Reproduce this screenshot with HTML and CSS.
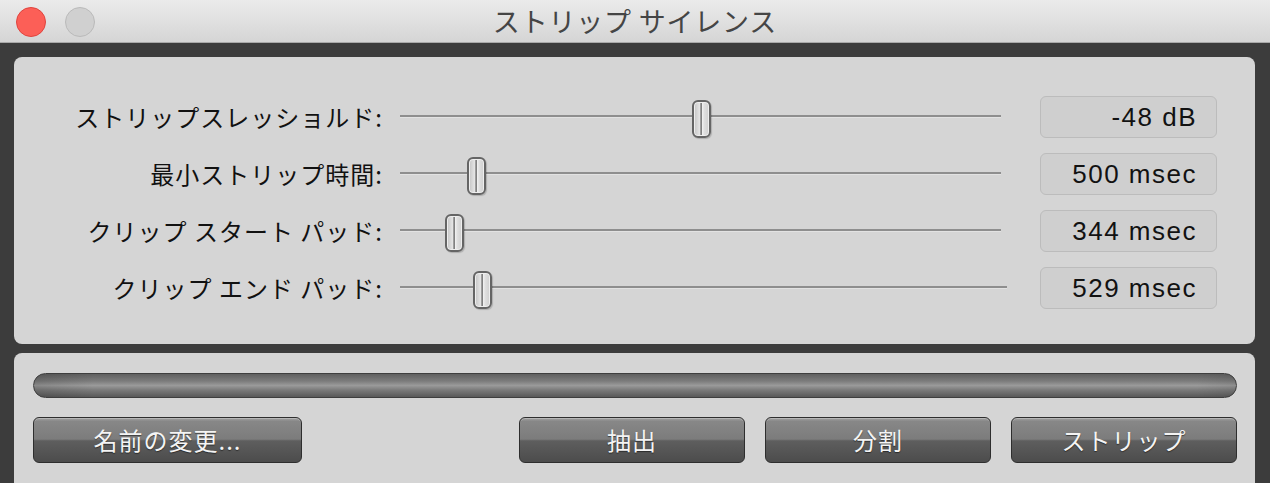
FILE: index.html
```html
<!DOCTYPE html>
<html lang="ja">
<head>
<meta charset="utf-8">
<title>ストリップ サイレンス</title>
<link rel="stylesheet" href="styles.css">
</head>
<body>
<div class="window">
  <header class="titlebar">
    <div class="lights">
      <span class="light light-close"></span>
      <span class="light light-idle"></span>
    </div>
    <div class="title">ストリップ サイレンス</div>
  </header>

  <main class="content">
    <section class="panel params">
      <div class="row">
        <label class="label">ストリップスレッショルド:</label>
        <div class="slider"><span class="track"></span><span class="thumb" style="left:292px"></span></div>
        <div class="value">-48 dB</div>
      </div>
      <div class="row">
        <label class="label">最小ストリップ時間:</label>
        <div class="slider"><span class="track"></span><span class="thumb" style="left:67px"></span></div>
        <div class="value">500 msec</div>
      </div>
      <div class="row">
        <label class="label">クリップ スタート パッド:</label>
        <div class="slider"><span class="track"></span><span class="thumb" style="left:45px"></span></div>
        <div class="value">344 msec</div>
      </div>
      <div class="row">
        <label class="label">クリップ エンド パッド:</label>
        <div class="slider slider-long"><span class="track"></span><span class="thumb" style="left:73px"></span></div>
        <div class="value">529 msec</div>
      </div>
    </section>

    <section class="panel actions">
      <div class="progress"></div>
      <div class="buttons">
        <button class="btn btn-rename">名前の変更...</button>
        <div class="btn-group">
          <button class="btn">抽出</button>
          <button class="btn">分割</button>
          <button class="btn">ストリップ</button>
        </div>
      </div>
    </section>
  </main>
</div>
</body>
</html>
```

FILE: styles.css
```css
html, body {
  margin: 0;
  padding: 0;
}

body {
  width: 1270px;
  height: 483px;
  overflow: hidden;
  background: #3c3c3c;
  font-family: "Noto Sans CJK JP", "Liberation Sans", sans-serif;
}

.window {
  width: 1270px;
  height: 483px;
  display: flex;
  flex-direction: column;
}

/* Title bar */
.titlebar {
  position: relative;
  height: 42px;
  flex: none;
  background: linear-gradient(#ebebeb, #d5d5d5);
  border-bottom: 1px solid #a9a9a9;
  display: flex;
  align-items: center;
  justify-content: center;
}

.lights {
  position: absolute;
  left: 16px;
  top: 7px;
  display: flex;
  gap: 19px;
}

.light {
  width: 28px;
  height: 28px;
  border-radius: 50%;
  box-sizing: content-box;
}

.light-close {
  background: #fc5f57;
  border: 1px solid #e0443e;
}

.light-idle {
  background: #d0d0d0;
  border: 1px solid #bababa;
}

.title {
  font-size: 27px;
  letter-spacing: 0.8px;
  color: #454545;
  line-height: 42px;
  margin-left: 0;
}

/* Content area */
.content {
  flex: 1;
  padding: 14px 15px 0 14px;
  display: flex;
  flex-direction: column;
  gap: 9px;
}

.panel {
  background: #d5d5d5;
  border-radius: 8px;
}

.params {
  height: 287px;
  box-sizing: border-box;
  padding-top: 31px;
  display: flex;
  flex-direction: column;
}

.row {
  height: 57px;
  display: flex;
  align-items: center;
}

.label {
  width: 369px;
  flex: none;
  text-align: right;
  font-size: 24px;
  letter-spacing: 1px;
  color: #111;
  margin-right: 17px;
  white-space: pre;
}

.slider {
  position: relative;
  width: 601px;
  height: 57px;
  flex: none;
  margin-right: 39px;
}

.slider-long {
  width: 607px;
  margin-right: 33px;
}

.track {
  position: absolute;
  left: 0;
  right: 0;
  top: 27px;
  height: 2px;
  background: #8e8e8e;
  box-shadow: 0 1px 0 #e2e2e2;
}

.thumb {
  position: absolute;
  top: 12px;
  width: 15px;
  height: 34px;
  border: 2px solid #656565;
  border-radius: 6px;
  background:
    linear-gradient(90deg, transparent 6px, #bdbdbd 6px, #808080 7px, #808080 8px, #f2f2f2 8px, transparent 10px),
    linear-gradient(90deg, #c4c4c4, #ebebeb 45%, #cfcfcf);
  box-shadow: inset 0 0 0 1px #eeeeee, 1px 1px 1px rgba(0, 0, 0, 0.18);
}

.value {
  width: 177px;
  height: 42px;
  flex: none;
  box-sizing: border-box;
  background: #cfcfcf;
  border: 1px solid #bcbcbc;
  border-radius: 6px;
  text-align: right;
  padding-right: 19px;
  font-family: "Liberation Sans", "DejaVu Sans", sans-serif;
  font-size: 26px;
  letter-spacing: 1.5px;
  line-height: 40px;
  color: #121212;
}

/* Bottom panel */
.actions {
  flex: 1;
  padding: 20px 18px 0 19px;
  display: flex;
  flex-direction: column;
  gap: 19px;
  border-bottom-left-radius: 0;
  border-bottom-right-radius: 0;
}

.progress {
  height: 25px;
  box-sizing: border-box;
  border: 1px solid #3e3e3e;
  border-radius: 13px;
  background:
    linear-gradient(90deg, rgba(0,0,0,0.12), transparent 60px, transparent calc(100% - 40px), rgba(0,0,0,0.08)),
    linear-gradient(#5f5f5f, #7b7b7b 30%, #9a9a9a 50%, #7a7a7a 70%, #595959);
}

.buttons {
  display: flex;
  justify-content: space-between;
}

.btn-group {
  display: flex;
  gap: 20px;
}

.btn {
  width: 226px;
  height: 46px;
  box-sizing: border-box;
  border: 1px solid #2e2e2e;
  border-radius: 6px;
  background: linear-gradient(#a2a2a2 0%, #878787 8%, #7c7c7c 48%, #5e5e5e 52%, #4c4c4c 100%);
  box-shadow: inset 0 1px 0 rgba(255,255,255,0.25);
  color: #f4f4f4;
  font-family: "Noto Sans CJK JP", "Liberation Sans", sans-serif;
  font-size: 24px;
  letter-spacing: 1px;
  text-shadow: 0 1px 1px rgba(0,0,0,0.5);
  padding: 0;
  line-height: 44px;
}

.btn-rename {
  width: 269px;
}
```
